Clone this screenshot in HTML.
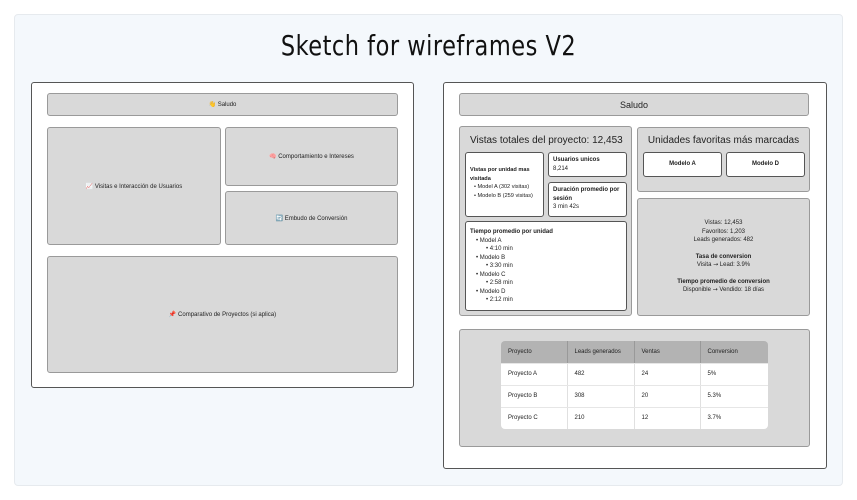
<!DOCTYPE html>
<html><head><meta charset="utf-8"><style>
*{box-sizing:border-box;margin:0;padding:0}
body{width:857px;height:500px;background:#fff;font-family:"Liberation Sans",sans-serif;color:#222;position:relative;overflow:hidden}
.a{position:absolute}
.panel{left:14px;top:14px;width:829px;height:472px;background:#f4f8fc;border:1px solid #e6eaee;border-radius:4px}
.title{left:0;width:857px;top:31px;text-align:center;font-family:"DejaVu Sans Condensed","Liberation Sans Narrow",sans-serif;font-size:25px;font-weight:200;letter-spacing:0.5px;color:#111;transform:scaleY(1.1)}
.frame{background:#fff;border:1.5px solid #555;border-radius:3px}
.g{background:#d9d9d9;border:1.5px solid #9a9a9a;border-radius:3px;display:flex;align-items:center;justify-content:center;font-size:6px;color:#222}
.w{background:#fff;border:1.5px solid #555;border-radius:3px;font-size:6px;padding:3px 4px;line-height:8.5px}
b{font-weight:bold}
ul{list-style:none}
li:before{content:"• ";}
.sub{padding-left:10px}
.ar{font-family:"DejaVu Sans",sans-serif}
table{border-collapse:collapse;font-size:6px;width:100%}
td,th{height:22px;text-align:left;padding-left:7px;font-weight:normal;border-right:1px solid #e0e0e0;border-bottom:1px solid #e6e6e6}
th{background:#b3b3b3;border-right:1px solid #999}
td{background:#fff}
</style></head><body>
<div class="a panel"></div>
<div class="a title">Sketch for wireframes V2</div>

<div class="a frame" style="left:31px;top:82px;width:383px;height:306px"></div>
<div class="a g" style="left:47px;top:93px;width:351px;height:23px">👋 Saludo</div>
<div class="a g" style="left:47px;top:127px;width:174px;height:118px">📈 Visitas e Interacción de Usuarios</div>
<div class="a g" style="left:225px;top:127px;width:173px;height:59px">🧠 Comportamiento e Intereses</div>
<div class="a g" style="left:225px;top:191px;width:173px;height:54px">🔄 Embudo de Conversión</div>
<div class="a g" style="left:47px;top:256px;width:351px;height:117px">📌 Comparativo de Proyectos (si aplica)</div>

<div class="a frame" style="left:443px;top:82px;width:384px;height:387px"></div>
<div class="a g" style="left:459px;top:93px;width:350px;height:23px;font-size:9px">Saludo</div>
<div class="a g" style="left:459px;top:126px;width:173px;height:190px;display:block"></div>
<div class="a" style="left:470px;top:135px;font-size:10px">Vistas totales del proyecto: 12,453</div>
<div class="a w" style="left:465px;top:152px;width:79px;height:65px;padding-top:13px;font-size:5.6px"><b>Vistas por unidad mas visitada</b><ul style="padding-left:4px"><li>Model A (302 visitas)</li><li>Modelo B (259 visitas)</li></ul></div>
<div class="a w" style="left:548px;top:152px;width:79px;height:25px"><b>Usuarios unicos</b><br>8,214</div>
<div class="a w" style="left:548px;top:182px;width:79px;height:35px"><b>Duración promedio por sesión</b><br>3 min 42s</div>
<div class="a w" style="left:465px;top:221px;width:162px;height:90px;padding-top:6px"><b>Tiempo promedio por unidad</b><ul style="padding-left:6px"><li>Model A</li><li class="sub">4:10 min</li><li>Modelo B</li><li class="sub">3:30 min</li><li>Modelo C</li><li class="sub">2:58 min</li><li>Modelo D</li><li class="sub">2:12 min</li></ul></div>

<div class="a g" style="left:637px;top:127px;width:173px;height:65px;display:block"></div>
<div class="a" style="left:637px;top:135px;width:173px;text-align:center;font-size:10px">Unidades favoritas más marcadas</div>
<div class="a w" style="left:643px;top:152px;width:79px;height:25px;display:flex;align-items:center;justify-content:center"><b>Modelo A</b></div>
<div class="a w" style="left:726px;top:152px;width:79px;height:25px;display:flex;align-items:center;justify-content:center"><b>Modelo D</b></div>

<div class="a g" style="left:637px;top:198px;width:173px;height:118px;flex-direction:column;line-height:8.5px;text-align:center">
<div>Vistas: 12,453<br>Favoritos: 1,203<br>Leads generados: 482</div>
<div style="margin-top:8px"><b>Tasa de conversion</b><br>Visita <span class="ar">→</span> Lead: 3.9%</div>
<div style="margin-top:8px"><b>Tiempo promedio de conversion</b><br>Disponible <span class="ar">→</span> Vendido: 18 días</div>
</div>

<div class="a g" style="left:459px;top:329px;width:351px;height:118px"></div>
<div class="a" style="left:501px;top:341px;width:267px;border-radius:4px;overflow:hidden">
<table><tr><th style="width:66px">Proyecto</th><th style="width:67px">Leads generados</th><th style="width:66px">Ventas</th><th style="border-right:none">Conversion</th></tr>
<tr><td>Proyecto A</td><td>482</td><td>24</td><td style="border-right:none">5%</td></tr>
<tr><td>Proyecto B</td><td>308</td><td>20</td><td style="border-right:none">5.3%</td></tr>
<tr><td style="border-bottom:none">Proyecto C</td><td style="border-bottom:none">210</td><td style="border-bottom:none">12</td><td style="border:none">3.7%</td></tr></table>
</div>
</body></html>
